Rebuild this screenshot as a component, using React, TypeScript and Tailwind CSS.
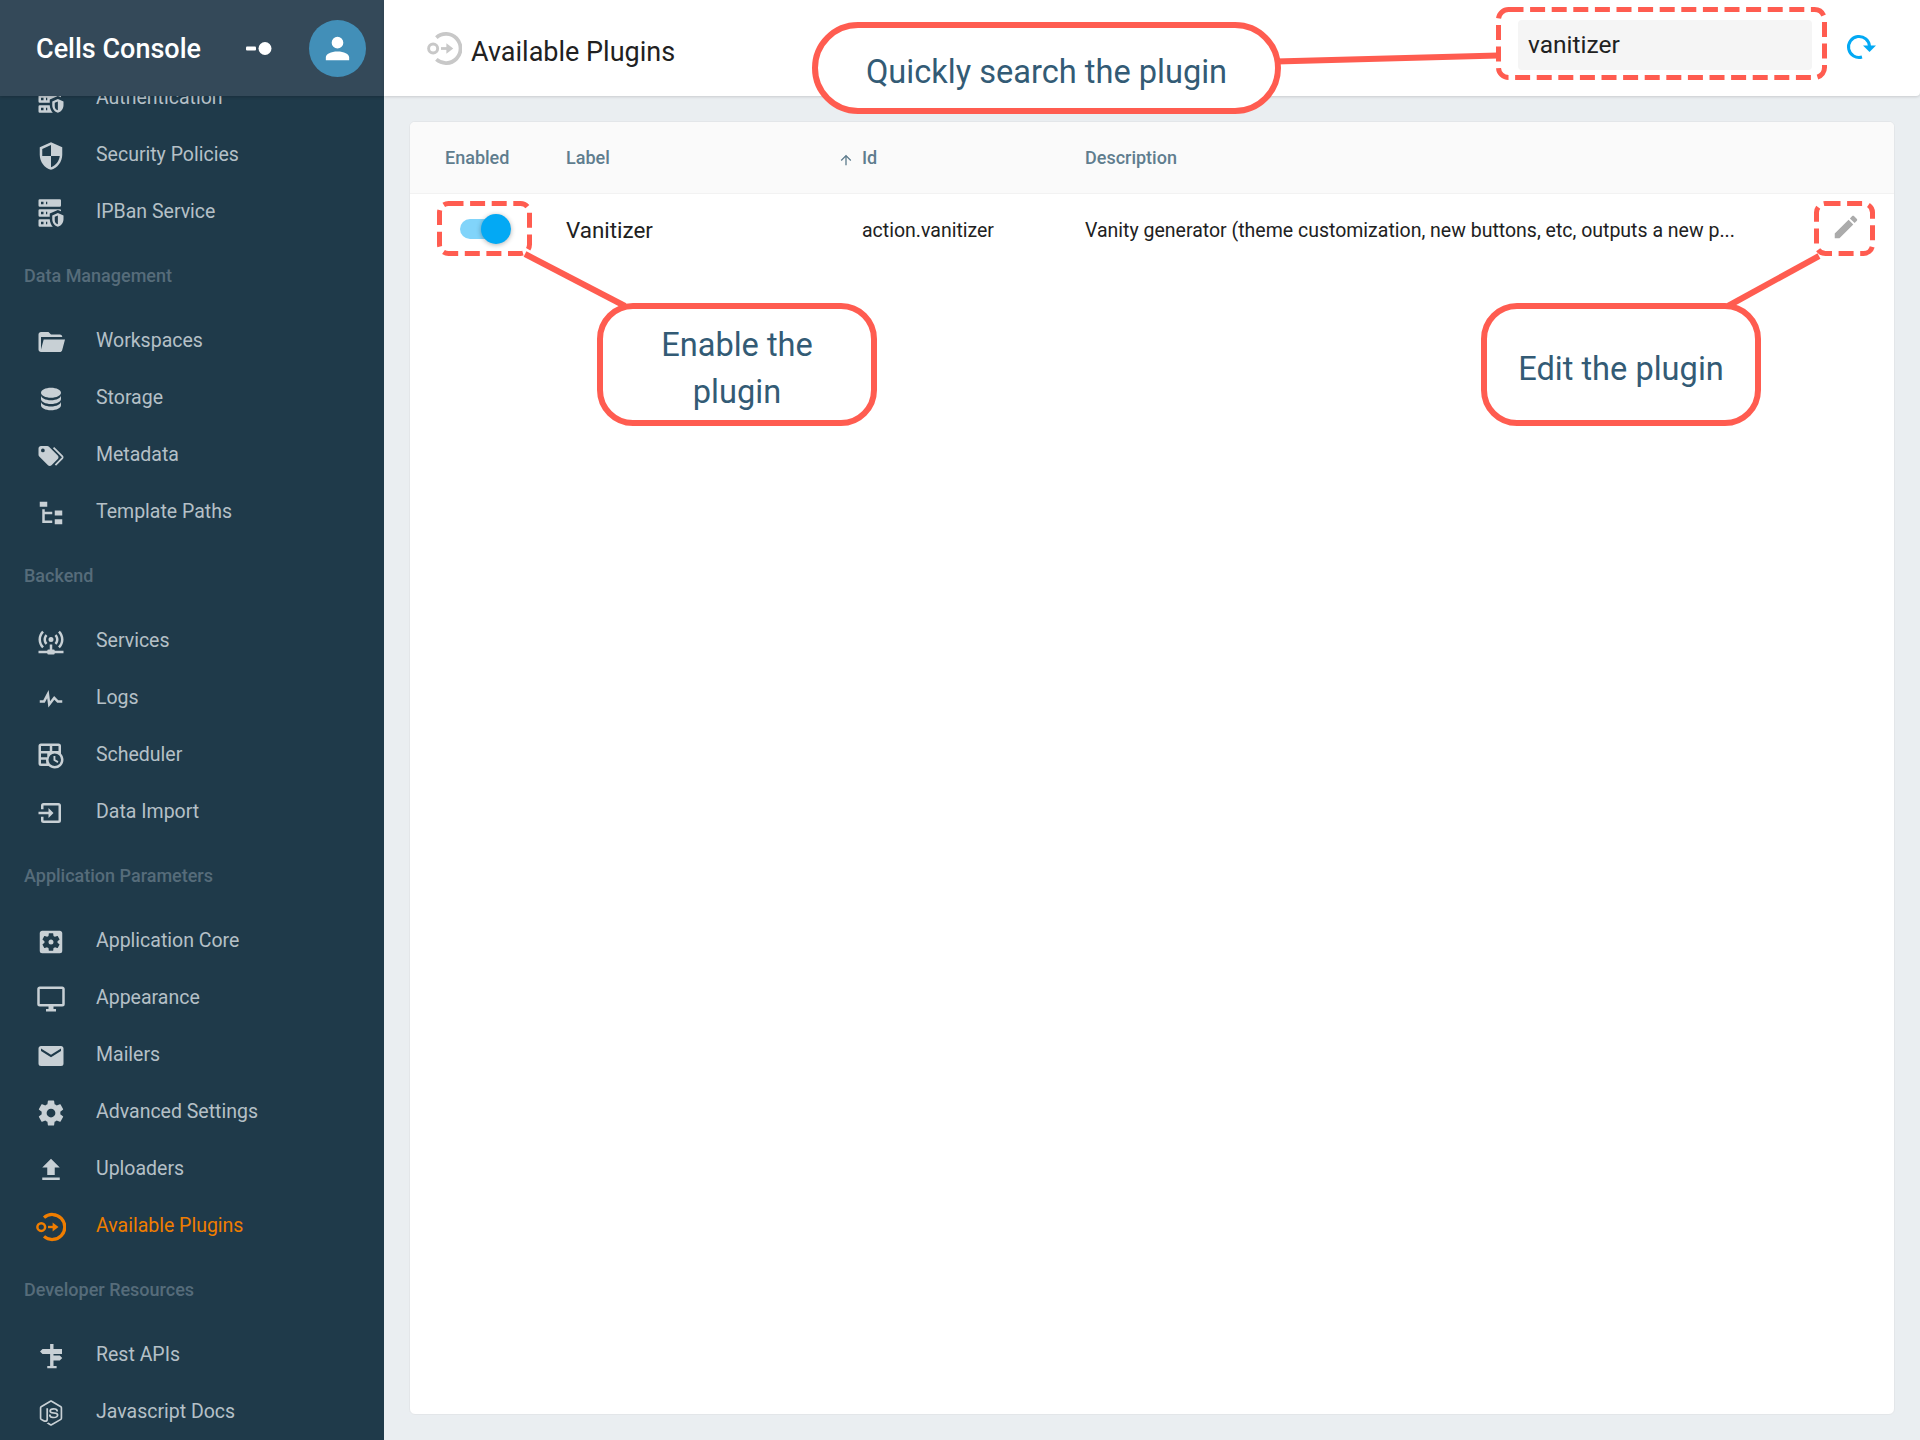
import type { ReactNode } from "react";

const paths = {
  serverSecurity:
    "M3,1H19A1,1 0 0,1 20,2V6A1,1 0 0,1 19,7H3A1,1 0 0,1 2,6V2A1,1 0 0,1 3,1M3,9H19A1,1 0 0,1 20,10V10.67L17.5,9.56L11,12.44V15H3A1,1 0 0,1 2,14V10A1,1 0 0,1 3,9M3,17H11C11.06,19.25 12,21.4 13.46,23H3A1,1 0 0,1 2,22V18A1,1 0 0,1 3,17M8,5H9V3H8V5M8,13H9V11H8V13M8,21H9V19H8V21M4,3V5H6V3H4M4,11V13H6V11H4M4,19V21H6V19H4M17.5,12L22,14V17C22,19.78 20.08,22.37 17.5,23C14.92,22.37 13,19.78 13,17V14L17.5,12M17.5,13.94L15,15.06V17.72C15,19.26 16.07,20.7 17.5,21.06V13.94Z",
  security:
    "M12,12H19C18.47,16.11 15.72,19.78 12,20.92V12H5V6.3L12,3.19M12,1L3,5V11C3,16.55 6.84,21.73 12,23C17.16,21.73 21,16.55 21,11V5L12,1Z",
  folderOpen:
    "M19,20H4C2.89,20 2,19.1 2,18V6C2,4.89 2.89,4 4,4H10L12,6H19A2,2 0 0,1 21,8H21L4,8V18L6.14,10H23.21L20.93,18.5C20.7,19.37 19.92,20 19,20Z",
  database:
    "M12,3C7.58,3 4,4.79 4,7C4,9.21 7.58,11 12,11C16.42,11 20,9.21 20,7C20,4.79 16.42,3 12,3M4,9V12C4,14.21 7.58,16 12,16C16.42,16 20,14.21 20,12V9C20,11.21 16.42,13 12,13C7.58,13 4,11.21 4,9M4,14V17C4,19.21 7.58,21 12,21C16.42,21 20,19.21 20,17V14C20,16.21 16.42,18 12,18C7.58,18 4,16.21 4,14Z",
  tags:
    "M5.5,9A1.5,1.5 0 0,0 7,7.5A1.5,1.5 0 0,0 5.5,6A1.5,1.5 0 0,0 4,7.5A1.5,1.5 0 0,0 5.5,9M17.41,11.58C17.77,11.94 18,12.44 18,13C18,13.55 17.78,14.05 17.41,14.41L12.41,19.41C12.05,19.77 11.55,20 11,20C10.45,20 9.95,19.78 9.58,19.41L2.59,12.42C2.22,12.05 2,11.55 2,11V6C2,4.89 2.89,4 4,4H9C9.55,4 10.05,4.22 10.41,4.58L17.41,11.58M13.54,5.71L14.54,4.71L21.41,11.58C21.78,11.94 22,12.45 22,13C22,13.55 21.78,14.05 21.42,14.41L16.04,19.79L15.04,18.79L20.75,13L13.54,5.71Z",
  fileTree: "M3,3H9V7H3V3M15,10H21V14H15V10M15,17H21V21H15V17M13,13H7V18H13V20H7L5,20V9H7V11H13V13Z",
  accessPoint:
    "M4.93,2.93C3.12,4.74 2,7.24 2,10C2,12.76 3.12,15.26 4.93,17.07L6.34,15.66C4.89,14.22 4,12.22 4,10C4,7.79 4.89,5.78 6.34,4.34L4.93,2.93M19.07,2.93L17.66,4.34C19.11,5.78 20,7.79 20,10C20,12.22 19.11,14.22 17.66,15.66L19.07,17.07C20.88,15.26 22,12.76 22,10C22,7.24 20.88,4.74 19.07,2.93M7.76,5.76C6.67,6.85 6,8.35 6,10C6,11.65 6.67,13.15 7.76,14.24L9.17,12.83C8.45,12.11 8,11.11 8,10C8,8.89 8.45,7.89 9.17,7.17L7.76,5.76M16.24,5.76L14.83,7.17C15.55,7.89 16,8.89 16,10C16,11.11 15.55,12.11 14.83,12.83L16.24,14.24C17.33,13.15 18,11.65 18,10C18,8.35 17.33,6.85 16.24,5.76M12,8A2,2 0 0,0 10,10A2,2 0 0,0 12,12A2,2 0 0,0 14,10A2,2 0 0,0 12,8M11,14V18H10A1,1 0 0,0 9,19H2V21H9A1,1 0 0,0 10,22H14A1,1 0 0,0 15,21H22V19H15A1,1 0 0,0 14,18H13V14H11Z",
  pulse: "M3,13H5.79L10.1,4.79L11.28,13.75L14.5,9.66L17.83,13H21V15H17L14.67,12.67L9.92,18.73L8.94,11.31L7,15H3V13Z",
  timetable:
    "M4,2H18A2,2 0 0,1 20,4V10.1C21.24,11.36 22,13.09 22,15A7,7 0 0,1 15,22C13.09,22 11.36,21.24 10.1,20H4A2,2 0 0,1 2,18V4A2,2 0 0,1 4,2ZM4,4V8H11V4ZM13,4V8H18V4ZM4,10V13H9V10ZM4,15V18H8.3C8.1,17 8,16 8,15ZM15,10A5,5 0 0,0 10,15A5,5 0 0,0 15,20A5,5 0 0,0 20,15A5,5 0 0,0 15,10ZM14,12H15.5V14.82L17.94,16.23L17.19,17.53L14,15.69Z",
  importBox:
    "M14,12L10,8V11H2V13H10V16M20,18V6C20,4.89 19.1,4 18,4H6A2,2 0 0,0 4,6V9H6V6H18V18H6V15H4V18A2,2 0 0,0 6,20H18A2,2 0 0,0 20,18Z",
  settingsBox:
    "M17.25,12C17.25,12.23 17.23,12.46 17.2,12.68L18.68,13.84C18.81,13.95 18.85,14.13 18.76,14.29L17.36,16.71C17.27,16.86 17.09,16.92 16.93,16.86L15.19,16.16C14.83,16.44 14.43,16.67 14,16.85L13.75,18.7C13.72,18.87 13.57,19 13.4,19H10.6C10.43,19 10.28,18.87 10.25,18.7L10,16.85C9.56,16.67 9.17,16.44 8.81,16.16L7.07,16.86C6.91,16.92 6.73,16.86 6.64,16.71L5.24,14.29C5.15,14.13 5.19,13.95 5.32,13.84L6.8,12.68C6.77,12.46 6.75,12.23 6.75,12C6.75,11.77 6.77,11.54 6.8,11.32L5.32,10.16C5.19,10.05 5.15,9.86 5.24,9.71L6.64,7.29C6.73,7.13 6.91,7.07 7.07,7.13L8.81,7.84C9.17,7.56 9.56,7.32 10,7.15L10.25,5.29C10.28,5.13 10.43,5 10.6,5H13.4C13.57,5 13.72,5.13 13.75,5.29L14,7.15C14.43,7.32 14.83,7.56 15.19,7.84L16.93,7.13C17.09,7.07 17.27,7.13 17.36,7.29L18.76,9.71C18.85,9.86 18.81,10.05 18.68,10.16L17.2,11.32C17.23,11.54 17.25,11.77 17.25,12M19,3H5C3.89,3 3,3.89 3,5V19A2,2 0 0,0 5,21H19A2,2 0 0,0 21,19V5C21,3.89 20.1,3 19,3M12,10C10.89,10 10,10.89 10,12A2,2 0 0,0 12,14A2,2 0 0,0 14,12C14,10.89 13.1,10 12,10Z",
  monitor:
    "M21,16H3V4H21M21,2H3C1.89,2 1,2.89 1,4V16A2,2 0 0,0 3,18H10V20H8V22H16V20H14V18H21A2,2 0 0,0 23,16V4C23,2.89 22.1,2 21,2Z",
  email:
    "M20,8L12,13L4,8V6L12,11L20,6M20,4H4C2.89,4 2,4.89 2,6V18A2,2 0 0,0 4,20H20A2,2 0 0,0 22,18V6C22,4.89 21.1,4 20,4Z",
  settings:
    "M12,15.5A3.5,3.5 0 0,1 8.5,12A3.5,3.5 0 0,1 12,8.5A3.5,3.5 0 0,1 15.5,12A3.5,3.5 0 0,1 12,15.5M19.43,12.97C19.47,12.65 19.5,12.33 19.5,12C19.5,11.67 19.47,11.34 19.43,11L21.54,9.37C21.73,9.22 21.78,8.95 21.66,8.73L19.66,5.27C19.54,5.05 19.27,4.96 19.05,5.05L16.56,6.05C16.04,5.66 15.5,5.32 14.87,5.07L14.5,2.42C14.46,2.18 14.25,2 14,2H10C9.75,2 9.54,2.18 9.5,2.42L9.13,5.07C8.5,5.32 7.96,5.66 7.44,6.05L4.95,5.05C4.73,4.96 4.46,5.05 4.34,5.27L2.34,8.73C2.21,8.95 2.27,9.22 2.46,9.37L4.57,11C4.53,11.34 4.5,11.67 4.5,12C4.5,12.33 4.53,12.65 4.57,12.97L2.46,14.63C2.27,14.78 2.21,15.05 2.34,15.27L4.34,18.73C4.46,18.95 4.73,19.03 4.95,18.95L7.44,17.94C7.96,18.34 8.5,18.68 9.13,18.93L9.5,21.58C9.54,21.82 9.75,22 10,22H14C14.25,22 14.46,21.82 14.5,21.58L14.87,18.93C15.5,18.67 16.04,18.34 16.56,17.94L19.05,18.95C19.27,19.03 19.54,18.95 19.66,18.73L21.66,15.27C21.78,15.05 21.73,14.78 21.54,14.63L19.43,12.97Z",
  upload: "M9,16V10H5L12,3L19,10H15V16H9M5,20V18H19V20H5Z",
  sign: "M11.3,2.4H14V6.4H20.8V10.4H14V11.6H19L21,13.6L19,15.6H14V20H16.5V21.8H9V20H11.3V10.4H5.2L3.2,8.4L5.2,6.4H11.3Z",
  nodejs:
    "M12,1.85C11.73,1.85 11.45,1.92 11.22,2.05L3.78,6.35C3.3,6.63 3,7.15 3,7.71V16.29C3,16.85 3.3,17.37 3.78,17.65L5.73,18.77C6.68,19.23 7,19.24 7.44,19.24C8.84,19.24 9.65,18.39 9.65,16.91V8.44C9.65,8.32 9.55,8.22 9.43,8.22H8.5C8.37,8.22 8.27,8.32 8.27,8.44V16.91C8.27,17.57 7.59,18.22 6.5,17.67L4.45,16.5C4.38,16.45 4.34,16.37 4.34,16.29V7.71C4.34,7.62 4.38,7.54 4.45,7.5L11.89,3.21C11.95,3.17 12.05,3.17 12.11,3.21L19.55,7.5C19.62,7.54 19.66,7.62 19.66,7.71V16.29C19.66,16.37 19.62,16.45 19.55,16.5L12.11,20.79C12.05,20.83 11.95,20.83 11.88,20.79L10,19.65C9.92,19.62 9.84,19.61 9.79,19.64C9.26,19.94 9.16,20 8.67,20.15C8.55,20.19 8.36,20.26 8.74,20.47L11.22,21.94C11.46,22.08 11.72,22.15 12,22.15C12.28,22.15 12.54,22.08 12.78,21.94L20.22,17.65C20.7,17.37 21,16.85 21,16.29V7.71C21,7.15 20.7,6.63 20.22,6.35L12.78,2.05C12.55,1.92 12.28,1.85 12,1.85M14,8C11.88,8 10.61,8.89 10.61,10.39C10.61,12 11.87,12.47 13.91,12.67C16.34,12.91 16.53,13.27 16.53,13.75C16.53,14.58 15.86,14.93 14.3,14.93C12.32,14.93 11.9,14.44 11.75,13.46C11.73,13.36 11.64,13.28 11.53,13.28H10.57C10.45,13.28 10.36,13.37 10.36,13.5C10.36,14.74 11.04,16.24 14.3,16.24C16.65,16.24 18,15.31 18,13.69C18,12.08 16.92,11.66 14.63,11.35C12.32,11.05 12.09,10.89 12.09,10.35C12.09,9.9 12.29,9.3 14,9.3C15.5,9.3 16.09,9.63 16.32,10.66C16.34,10.76 16.43,10.83 16.53,10.83H17.5C17.56,10.83 17.61,10.81 17.65,10.76C17.69,10.72 17.72,10.66 17.7,10.6C17.56,8.82 16.38,8 14,8Z",
  account: "M12,4A4,4 0 0,1 16,8A4,4 0 0,1 12,12A4,4 0 0,1 8,8A4,4 0 0,1 12,4M12,14C16.42,14 20,15.79 20,18V20H4V18C4,15.79 7.58,14 12,14Z",
  pencil:
    "M20.71,7.04C21.1,6.65 21.1,6 20.71,5.63L18.37,3.29C18,2.9 17.35,2.9 16.96,3.29L15.12,5.12L18.87,8.87M3,17.25V21H6.75L17.81,9.93L14.06,6.18L3,17.25Z",
  arrowUp: "M13,20H11V8L5.5,13.5L4.08,12.08L12,4.16L19.92,12.08L18.5,13.5L13,8V20Z",
};

function Mdi({ d, className, evenOdd }: { d: string; className: string; evenOdd?: boolean }) {
  return (
    <svg viewBox="0 0 24 24" className={className} fill="currentColor">
      <path d={d} fillRule={evenOdd ? "evenodd" : "nonzero"} />
    </svg>
  );
}

function PluginIcon({ className }: { className: string }) {
  return (
    <svg viewBox="0 0 24 24" className={className} fill="none" stroke="currentColor">
      <path d="M6.4 4.5A10 10 0 1 1 6.4 19.5" strokeWidth="2.6" />
      <circle cx="4.2" cy="12" r="3.1" strokeWidth="2" />
      <path d="M9.6 12H14" strokeWidth="1.9" />
      <path d="M13.3 8.4L18 12L13.3 15.6Z" fill="currentColor" stroke="none" />
    </svg>
  );
}

function ReloadIcon({ className }: { className: string }) {
  return (
    <svg viewBox="0 0 32 32" className={className} fill="none" stroke="currentColor">
      <path d="M16 26A10.5 10.5 0 1 1 23.5 15.5" strokeWidth="3" />
      <path d="M17 14.5H30L23.5 21Z" fill="currentColor" stroke="none" />
    </svg>
  );
}

type NavItem = { label: string; icon: ReactNode; active?: boolean };

const ic = "w-[30px] h-[30px]";

const groups: { title?: string; items: NavItem[] }[] = [
  {
    items: [
      { label: "Authentication", icon: <Mdi d={paths.serverSecurity} className={ic} /> },
      { label: "Security Policies", icon: <Mdi d={paths.security} className={ic} evenOdd /> },
      { label: "IPBan Service", icon: <Mdi d={paths.serverSecurity} className={ic} /> },
    ],
  },
  {
    title: "Data Management",
    items: [
      { label: "Workspaces", icon: <Mdi d={paths.folderOpen} className={ic} /> },
      { label: "Storage", icon: <Mdi d={paths.database} className={ic} /> },
      { label: "Metadata", icon: <Mdi d={paths.tags} className={ic} /> },
      { label: "Template Paths", icon: <Mdi d={paths.fileTree} className={ic} /> },
    ],
  },
  {
    title: "Backend",
    items: [
      { label: "Services", icon: <Mdi d={paths.accessPoint} className={ic} /> },
      { label: "Logs", icon: <Mdi d={paths.pulse} className={ic} /> },
      { label: "Scheduler", icon: <Mdi d={paths.timetable} className={ic} evenOdd /> },
      { label: "Data Import", icon: <Mdi d={paths.importBox} className={ic} /> },
    ],
  },
  {
    title: "Application Parameters",
    items: [
      { label: "Application Core", icon: <Mdi d={paths.settingsBox} className={ic} /> },
      { label: "Appearance", icon: <Mdi d={paths.monitor} className={ic} /> },
      { label: "Mailers", icon: <Mdi d={paths.email} className={ic} /> },
      { label: "Advanced Settings", icon: <Mdi d={paths.settings} className={ic} /> },
      { label: "Uploaders", icon: <Mdi d={paths.upload} className={ic} /> },
      { label: "Available Plugins", icon: <PluginIcon className={ic} />, active: true },
    ],
  },
  {
    title: "Developer Resources",
    items: [
      { label: "Rest APIs", icon: <Mdi d={paths.sign} className={ic} /> },
      { label: "Javascript Docs", icon: <Mdi d={paths.nodejs} className={ic} /> },
    ],
  },
];

function Sidebar() {
  return (
    <aside className="flex h-[1440px] w-[384px] shrink-0 flex-col overflow-hidden bg-[#1f3a4a]">
      <div className="relative z-10 flex h-24 shrink-0 items-center bg-[#344959] pl-9 pr-[18px] shadow-[0_1px_3px_rgba(0,0,0,0.2)]">
        <span className="w-[210px] pt-[3px] text-[27px] font-medium text-white">Cells Console</span>
        <svg viewBox="0 0 26 13" className="h-[13px] w-[26px] text-white" fill="currentColor">
          <rect x="0" y="4.5" width="10" height="4" rx="1" />
          <circle cx="19" cy="6.5" r="6.5" />
        </svg>
        <div className="ml-auto flex h-[57px] w-[57px] items-center justify-center rounded-full bg-[#428fb8] text-white">
          <Mdi d={paths.account} className="h-[35px] w-[35px]" />
        </div>
      </div>
      <nav className="-mt-[27px]">
        {groups.map((g, i) => (
          <div key={i}>
            {g.title && (
              <div className="flex h-[72px] items-center pb-px pl-6 text-[18px] font-medium text-[#566c7a]">
                {g.title}
              </div>
            )}
            {g.items.map((item) => (
              <div
                key={item.label}
                className={`flex h-[57px] items-center text-[19.5px] ${item.active ? "text-[#ef7d00]" : "text-[#b5c0c7]"}`}
              >
                <span className={`ml-9 w-[60px] translate-y-px ${item.active ? "text-[#ef7d00]" : "text-[#c8d0d5]"}`}>{item.icon}</span>
                {item.label}
              </div>
            ))}
          </div>
        ))}
      </nav>
    </aside>
  );
}

function Topbar() {
  return (
    <header className="relative z-10 flex h-24 shrink-0 items-center rounded-br-[4px] bg-white pl-[43px] shadow-[0_1px_3px_rgba(0,0,0,0.15)]">
      <PluginIcon className="h-[35px] w-[35px] text-[#c8c8c8]" />
      <h1 className="ml-[9px] pt-[9px] text-[27px] text-[#212121]">Available Plugins</h1>
      <div className="ml-auto -mt-[6px] flex h-[50px] w-[294px] items-center rounded-[4px] bg-[#f5f5f5] pl-[10px] text-[24.5px] text-[#212121]">
        vanitizer
      </div>
      <ReloadIcon className="-mt-[2px] ml-[34px] mr-[42px] h-8 w-8 text-[#03a9f4]" />
    </header>
  );
}

function PluginTable() {
  return (
    <section className="m-[25px] flex-1 overflow-hidden rounded-[6px] border border-[#e3e6e9] bg-white">
      <div className="flex h-[72px] items-center border-b border-[#f2f2f2] bg-[#fafafa] text-[18px] font-medium text-[#5f7d8e]">
        <div className="w-[156px] pl-[35px]">Enabled</div>
        <div className="w-[296px]">Label</div>
        <div className="flex w-[223px] items-center">
          <Mdi d={paths.arrowUp} className="-ml-[24px] mr-[8px] mt-[5px] h-4 w-4" />
          Id
        </div>
        <div>Description</div>
      </div>
      <div className="flex h-[74px] items-center text-[#212121]">
        <div className="w-[156px] pl-[50px]">
          <div className="relative -mt-[4px] h-5 w-[50px] rounded-full bg-[#81d4fa]">
            <div className="absolute -top-[5px] left-[21px] h-[30px] w-[30px] rounded-full bg-[#03a9f4] shadow-[0_1px_5px_rgba(0,0,0,0.3)]" />
          </div>
        </div>
        <div className="w-[296px] text-[22.4px]">Vanitizer</div>
        <div className="w-[223px] text-[19.5px]">action.vanitizer</div>
        <div className="text-[19.5px]">Vanity generator (theme customization, new buttons, etc, outputs a new p...</div>
        <Mdi d={paths.pencil} className="ml-auto mr-[33px] h-[30px] w-[30px] -translate-y-[4px] text-[#ababab]" />
      </div>
    </section>
  );
}

const bubble =
  "absolute flex items-center justify-center border-[6px] border-[#ff5c50] bg-white pt-[9px] text-center text-[32.6px] leading-[47px] text-[#335b75]";

function Annotations() {
  return (
    <>
      <svg className="pointer-events-none absolute inset-0 z-20 h-[1440px] w-[1920px]" fill="none" stroke="#ff5c50">
        <g strokeWidth="6">
          <path d="M1276 61.5L1498 55.5" />
          <path d="M525 254L625 306" />
          <path d="M1819 256L1728 306" />
        </g>
        <g strokeWidth="5" strokeDasharray="15 6.6">
          <rect x="1498.5" y="9.5" width="326" height="68" rx="10" />
          <rect x="439.5" y="203.5" width="90" height="50" rx="9" />
          <rect x="1816.5" y="203.5" width="56" height="50" rx="9" />
        </g>
      </svg>
      <div className={`${bubble} left-[812px] top-[22px] z-30 h-[92px] w-[469px] rounded-[46px]`}>
        Quickly search the plugin
      </div>
      <div className={`${bubble} left-[597px] top-[303px] z-30 h-[123px] w-[280px] rounded-[36px]`}>
        Enable the
        <br />
        plugin
      </div>
      <div className={`${bubble} left-[1481px] top-[303px] z-30 h-[123px] w-[280px] rounded-[36px]`}>
        Edit the plugin
      </div>
    </>
  );
}

export default function App() {
  return (
    <div className="relative flex h-[1440px] w-[1920px] overflow-hidden bg-[#eaeef1] [font-family:Roboto,sans-serif]">
      <Sidebar />
      <main className="flex min-w-0 flex-1 flex-col">
        <Topbar />
        <PluginTable />
      </main>
      <Annotations />
    </div>
  );
}
